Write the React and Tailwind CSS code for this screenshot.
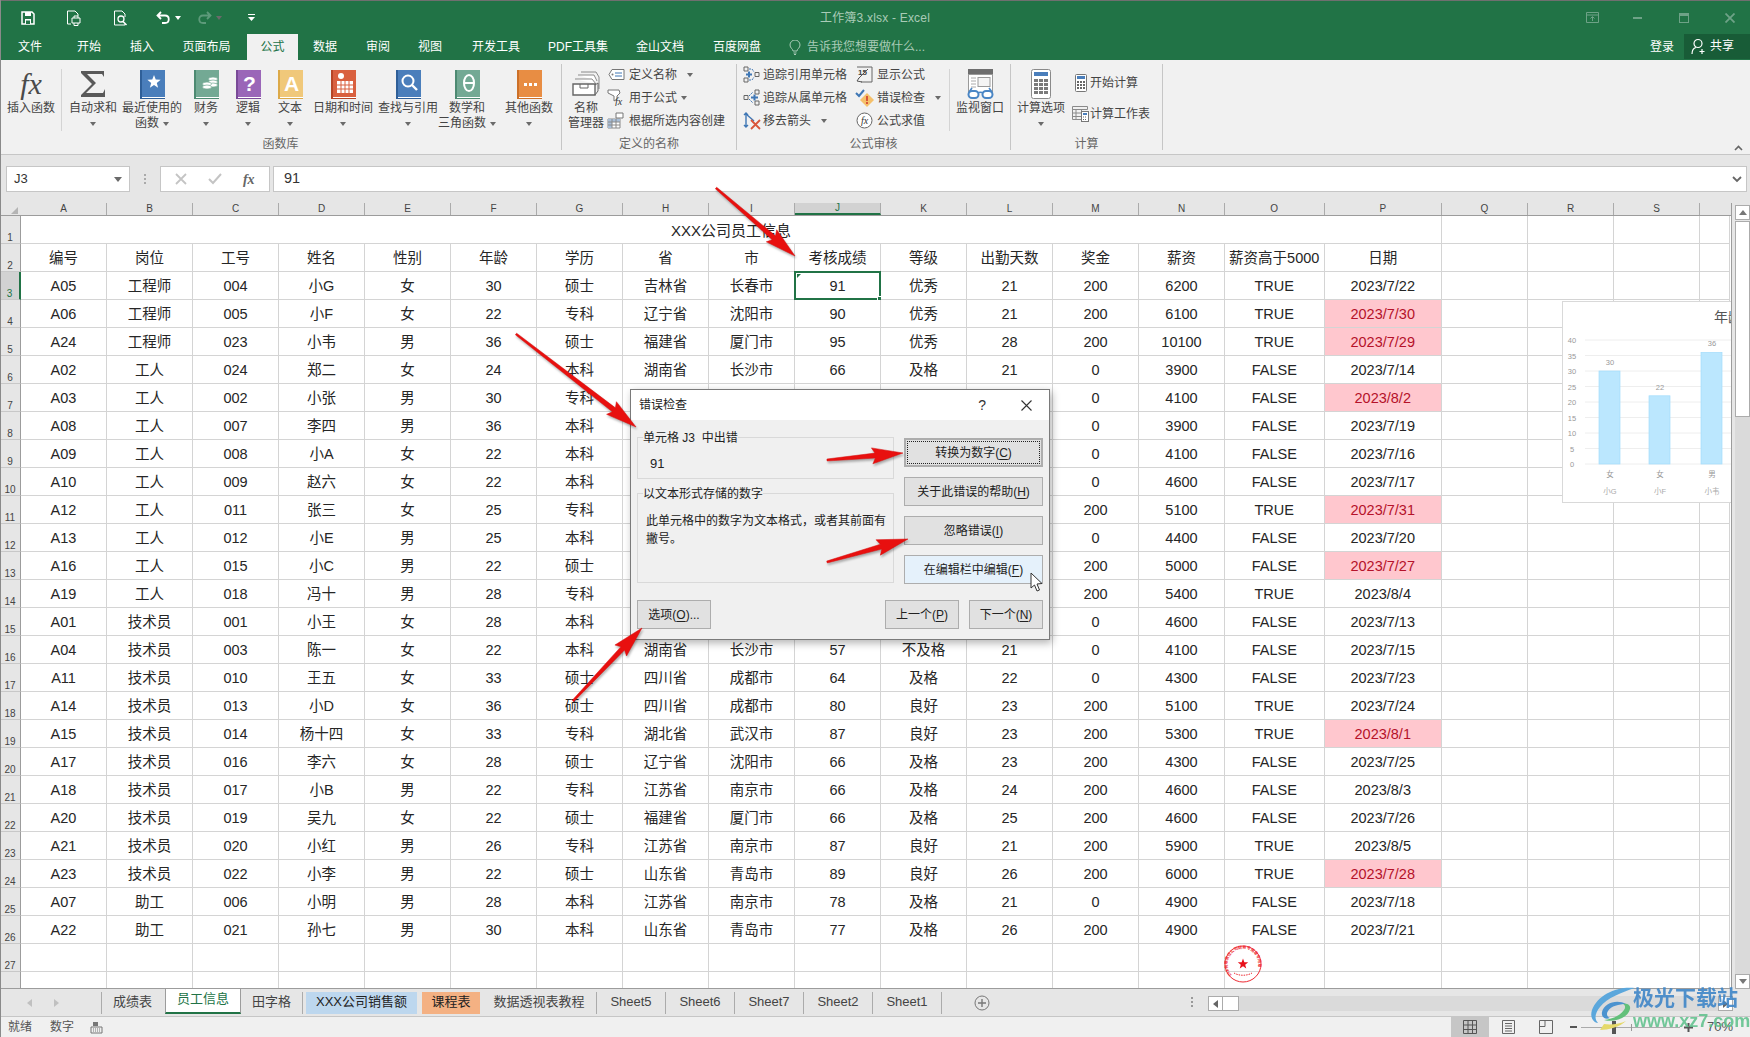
const COLS = ["A", "B", "C", "D", "E", "F", "G", "H", "I", "J", "K", "L", "M", "N", "O", "P", "Q", "R", "S", ""];

const HEADERS = ["编号", "岗位", "工号", "姓名", "性别", "年龄", "学历", "省", "市", "考核成绩", "等级", "出勤天数", "奖金", "薪资", "薪资高于5000", "日期"];

// "-" = hidden behind the dialog, * on the date = conditional format
const ROWS = [
  "A05 工程师 004 小G 女 30 硕士 吉林省 长春市 91 优秀 21 200 6200 TRUE 2023/7/22",
  "A06 工程师 005 小F 女 22 专科 辽宁省 沈阳市 90 优秀 21 200 6100 TRUE 2023/7/30*",
  "A24 工程师 023 小韦 男 36 硕士 福建省 厦门市 95 优秀 28 200 10100 TRUE 2023/7/29*",
  "A02 工人 024 郑二 女 24 本科 湖南省 长沙市 66 及格 21 0 3900 FALSE 2023/7/14",
  "A03 工人 002 小张 男 30 专科 - - - - - 0 4100 FALSE 2023/8/2*",
  "A08 工人 007 李四 男 36 本科 - - - - - 0 3900 FALSE 2023/7/19",
  "A09 工人 008 小A 女 22 本科 - - - - - 0 4100 FALSE 2023/7/16",
  "A10 工人 009 赵六 女 22 本科 - - - - - 0 4600 FALSE 2023/7/17",
  "A12 工人 011 张三 女 25 专科 - - - - - 200 5100 TRUE 2023/7/31*",
  "A13 工人 012 小E 男 25 本科 - - - - - 0 4400 FALSE 2023/7/20",
  "A16 工人 015 小C 男 22 硕士 - - - - - 200 5000 FALSE 2023/7/27*",
  "A19 工人 018 冯十 男 28 专科 - - - - - 200 5400 TRUE 2023/8/4",
  "A01 技术员 001 小王 女 28 本科 - - - - - 0 4600 FALSE 2023/7/13",
  "A04 技术员 003 陈一 女 22 本科 湖南省 长沙市 57 不及格 21 0 4100 FALSE 2023/7/15",
  "A11 技术员 010 王五 女 33 硕士 四川省 成都市 64 及格 22 0 4300 FALSE 2023/7/23",
  "A14 技术员 013 小D 女 36 硕士 四川省 成都市 80 良好 23 200 5100 TRUE 2023/7/24",
  "A15 技术员 014 杨十四 女 33 专科 湖北省 武汉市 87 良好 23 200 5300 TRUE 2023/8/1*",
  "A17 技术员 016 李六 女 28 硕士 辽宁省 沈阳市 66 及格 23 200 4300 FALSE 2023/7/25",
  "A18 技术员 017 小B 男 22 专科 江苏省 南京市 66 及格 24 200 4600 FALSE 2023/8/3",
  "A20 技术员 019 吴九 女 22 硕士 福建省 厦门市 66 及格 25 200 4600 FALSE 2023/7/26",
  "A21 技术员 020 小红 男 26 专科 江苏省 南京市 87 良好 21 200 5900 TRUE 2023/8/5",
  "A23 技术员 022 小李 男 22 硕士 山东省 青岛市 89 良好 26 200 6000 TRUE 2023/7/28*",
  "A07 助工 006 小明 男 28 本科 江苏省 南京市 78 及格 21 0 4900 FALSE 2023/7/18",
  "A22 助工 021 孙七 男 30 本科 山东省 青岛市 77 及格 26 200 4900 FALSE 2023/7/21",
].map((r) => r.split(" "));

const GRID_COLS = "grid grid-cols-[repeat(14,86px)_99.5px_117.5px_86px_86px_86px_30px]";

// ===== Small shapes =====
function Caret({ className = "" }) {
  return <span className={`inline-block w-0 h-0 border-x-[3px] border-t-[4px] border-x-transparent border-t-[#6a6a6a] ${className}`} />;
}

function Book({ color, dark, children }) {
  return (
    <svg width="25" height="29" viewBox="0 0 25 29">
      <rect x="1" y="0" width="24" height="27" fill={color} />
      <rect x="0" y="0" width="2" height="28" fill={dark} />
      <rect x="0" y="27" width="25" height="2" fill={dark} />
      <rect x="2" y="27" width="23" height="1" fill="#fff" />
      {children}
    </svg>
  );
}

function Star5({ cx, cy, r, fill }) {
  const pts = [];
  for (let i = 0; i < 10; i++) {
    const a = (Math.PI / 5) * i - Math.PI / 2;
    const rr = i % 2 ? r * 0.42 : r;
    pts.push(`${cx + rr * Math.cos(a)},${cy + rr * Math.sin(a)}`);
  }
  return <polygon points={pts.join(" ")} fill={fill} />;
}

const ICONS = {
  fx: <span className="[font-family:'Liberation_Serif',serif] italic text-[30px] leading-[30px] text-[#4a4a4a]">fx</span>,
  sum: (
    <svg width="26" height="28" viewBox="0 0 26 28">
      <path d="M1 1h23v6l-2-3H7l9 9-10 10h17l2-4v8H1v-2l11-11L1 3z" fill="#595959" />
    </svg>
  ),
  recent: (
    <Book color="#4a7ebb" dark="#2f5f98">
      <Star5 cx={14} cy={12} r={7} fill="#fff" />
    </Book>
  ),
  finance: (
    <Book color="#73a994" dark="#4d8a72">
      <g fill="#fff" stroke="#73a994" strokeWidth="0.7">
        <ellipse cx="19" cy="9" rx="4.5" ry="2" />
        <ellipse cx="19" cy="12" rx="4.5" ry="2" />
        <ellipse cx="19" cy="15" rx="4.5" ry="2" />
        <ellipse cx="13" cy="14" rx="4.5" ry="2" />
        <ellipse cx="13" cy="17" rx="4.5" ry="2" />
      </g>
    </Book>
  ),
  logic: (
    <Book color="#9a66b8" dark="#7a4a98">
      <text x="13.5" y="21" textAnchor="middle" fontSize="21" fontWeight="700" fill="#fff" fontFamily="Liberation Sans">?</text>
    </Book>
  ),
  text: (
    <Book color="#f0c87a" dark="#dca948">
      <text x="13.5" y="21" textAnchor="middle" fontSize="21" fontWeight="700" fill="#fff" fontFamily="Liberation Sans">A</text>
    </Book>
  ),
  date: (
    <Book color="#d9603f" dark="#b64526">
      <circle cx="10" cy="6" r="3" fill="#fff" />
      <path d="M6 11h16v12H6z" fill="#fff" />
      <path d="M6 15h16M6 19h16M10 11v12M14 11v12M18 11v12" stroke="#d9603f" strokeWidth="1" />
    </Book>
  ),
  lookup: (
    <Book color="#4a7ebb" dark="#2f5f98">
      <circle cx="12" cy="11" r="5.5" fill="none" stroke="#fff" strokeWidth="2" />
      <path d="M16 15l5 5" stroke="#fff" strokeWidth="2.4" />
    </Book>
  ),
  math: (
    <Book color="#73a994" dark="#4d8a72">
      <ellipse cx="14" cy="13" rx="5" ry="8" fill="none" stroke="#fff" strokeWidth="2" />
      <path d="M9 13h10" stroke="#fff" strokeWidth="2" />
    </Book>
  ),
  other: (
    <Book color="#e88d43" dark="#cc7028">
      <path d="M7 13h3v3H7zM12 13h3v3h-3zM17 13h3v3h-3z" fill="#fff" />
    </Book>
  ),
  names: (
    <svg width="28" height="28" viewBox="0 0 28 28" fill="none">
      <path d="M9 2h15l3 5v12" stroke="#8a8a8a" />
      <path d="M6 5h16l3 6" stroke="#8a8a8a" fill="#fff" />
      <path d="M3 9h17l4 5" stroke="#8a8a8a" fill="#fff" />
      <path d="M1 14h22v11H1z" fill="#fff" stroke="#666" strokeWidth="1.4" />
      <path d="M8 14v4h8v-4" stroke="#666" />
      <path d="M23 15l3-2v8l-3 4" stroke="#666" />
    </svg>
  ),
  watch: (
    <svg width="28" height="32" viewBox="0 0 28 32" fill="none">
      <rect x="2" y="1" width="25" height="6" fill="#6e6e6e" />
      <rect x="2.5" y="6.5" width="24" height="18" fill="#fff" stroke="#9a9a9a" />
      <path d="M5 10h5M5 13h5M5 16h5M5 19h5" stroke="#aaa" />
      <rect x="12" y="9.5" width="12" height="9" stroke="#9a9a9a" fill="#f5f5f5" />
      <rect x="2.5" y="23" width="10" height="7" rx="3.5" fill="#fff" stroke="#4a86c5" strokeWidth="2" />
      <rect x="16.5" y="23" width="10" height="7" rx="3.5" fill="#fff" stroke="#4a86c5" strokeWidth="2" />
      <path d="M12 25c1-1 4-1 5 0M3 24l3-4M26 24l-3-4" stroke="#4a86c5" strokeWidth="1.6" />
    </svg>
  ),
  calc: (
    <svg width="20" height="30" viewBox="0 0 20 30" fill="none">
      <rect x="0.5" y="0.5" width="19" height="29" rx="2" fill="#fff" stroke="#8a8a8a" />
      <rect x="3" y="3" width="14" height="4" fill="#4a7ebb" />
      {[10, 14, 18, 22].map((y) => [3, 8, 13].map((x) => <rect key={`${x}-${y}`} x={x} y={y} width="4" height="3" fill="#7a7a7a" />))}
    </svg>
  ),
};

const SMALL = {
  defineName: (
    <svg width="17" height="14" viewBox="0 0 17 14" fill="none">
      <path d="M4 1.5h12v10H4L1 6.5z" fill="#fff" stroke="#777" />
      <circle cx="4.5" cy="6.5" r="1" fill="#777" />
      <path d="M7 5h7M7 8h7" stroke="#3f77b5" />
    </svg>
  ),
  useFormula: (
    <svg width="18" height="17" viewBox="0 0 18 17" fill="none">
      <path d="M1 1h11l1 3-3 3v3l-3 2V7L1 4z" stroke="#777" fill="#fff" />
      <text x="8" y="16" fontSize="10" fontStyle="italic" fontFamily="Liberation Serif" fill="#333">fx</text>
    </svg>
  ),
  create: (
    <svg width="18" height="17" viewBox="0 0 18 17" fill="none">
      <path d="M9 1h7v5H9z" stroke="#777" fill="#fff" />
      <path d="M1 7h12v9H1z" stroke="#8a8a8a" fill="#fff" />
      <path d="M1 7h12v3H1zM1 10h4v6H1z" fill="#a9bfd8" />
      <path d="M1 10h12M1 13h12M5 7v9M9 7v9" stroke="#8a8a8a" />
    </svg>
  ),
  precedents: (
    <svg width="17" height="17" viewBox="0 0 17 17" fill="none">
      <path d="M1 1h4v4H1zM1 12h4v4H1zM12 6.5h4v4h-4z" stroke="#666" />
      <path d="M6 3h3l2 3M6 14h3l2-3" stroke="#3f77b5" strokeDasharray="2 1" />
      <path d="M3 8.5h6M6 5.5v6" stroke="#3f77b5" strokeWidth="2" />
    </svg>
  ),
  dependents: (
    <svg width="17" height="17" viewBox="0 0 17 17" fill="none">
      <path d="M12 1h4v4h-4zM12 12h4v4h-4zM1 6.5h4v4H1z" stroke="#666" />
      <path d="M6 7l4-4M6 10l4 4" stroke="#3f77b5" strokeDasharray="2 1" />
      <path d="M8 8.5h7M11.5 5.5v6" stroke="#3f77b5" strokeWidth="2" />
    </svg>
  ),
  removeArrows: (
    <svg width="18" height="18" viewBox="0 0 18 18" fill="none">
      <path d="M3 1v14M1 3l2-2 2 2M1 13l2 2 2-2" stroke="#3f77b5" strokeWidth="1.4" />
      <path d="M3 2l8 7" stroke="#3f77b5" strokeWidth="1.4" />
      <path d="M8 8l9 9M17 8l-9 9" stroke="#d9553a" strokeWidth="1.8" />
    </svg>
  ),
  showFormulas: (
    <svg width="17" height="17" viewBox="0 0 17 17" fill="none">
      <path d="M1 1h15v15H5" stroke="#666" />
      <text x="2" y="9" fontSize="8" fontWeight="700" fontFamily="Liberation Sans" fill="#444">15</text>
      <path d="M2 13l10-10M6 16l-5-1 2-3" stroke="#555" />
    </svg>
  ),
  errorCheck: (
    <svg width="20" height="18" viewBox="0 0 20 18" fill="none">
      <path d="M12 4l7 7-7 7-7-7z" fill="#f5c06a" />
      <path d="M12 7v5M12 13v2" stroke="#d9553a" strokeWidth="2" />
      <path d="M1 4l3 3 5-6" stroke="#3f77b5" strokeWidth="2" />
    </svg>
  ),
  evaluate: (
    <svg width="17" height="17" viewBox="0 0 17 17" fill="none">
      <circle cx="8.5" cy="8.5" r="7.5" stroke="#666" fill="#fff" />
      <text x="8.5" y="12" textAnchor="middle" fontSize="10" fontStyle="italic" fontFamily="Liberation Serif" fill="#333">fx</text>
    </svg>
  ),
  calcNow: (
    <svg width="12" height="18" viewBox="0 0 12 18" fill="none">
      <rect x="0.5" y="0.5" width="11" height="17" rx="1" fill="#fff" stroke="#777" />
      <rect x="2" y="2" width="8" height="3" fill="#4a7ebb" />
      {[7, 10, 13].map((y) => [2, 5, 8].map((x) => <rect key={`${x}-${y}`} x={x} y={y} width="2" height="2" fill="#666" />))}
    </svg>
  ),
  calcSheet: (
    <svg width="17" height="16" viewBox="0 0 17 16" fill="none">
      <path d="M0.5 0.5h15v3h-15zM0.5 3.5h9v10h-9zM0.5 7h9M0.5 10.5h9M4 3.5v10" stroke="#8a8a8a" />
      <rect x="9.5" y="5.5" width="7" height="10" fill="#fff" stroke="#777" />
      <rect x="11" y="7" width="4" height="2" fill="#4a7ebb" />
      <path d="M11 11h4M11 13.5h4" stroke="#666" strokeDasharray="1 1" />
    </svg>
  ),
};

// ===== Ribbon bits =====
function BigButton({ w, icon, lines, caret, className = "" }) {
  return (
    <div className={`flex flex-col items-center shrink-0 ${w} ${className}`}>
      <div className="h-[34px] mt-[3px] flex items-center justify-center">{icon}</div>
      {lines.map((l, i) => (
        <div key={i} className="h-[15px] leading-[15px] whitespace-nowrap text-[12px] text-[#444] flex items-center gap-[4px]">
          {l}
          {caret && i === 1 && <Caret />}
        </div>
      ))}
      {caret && lines.length === 1 && (
        <div className="h-[15px] flex items-center">
          <Caret />
        </div>
      )}
    </div>
  );
}

function SmallRow({ icon, label, caret, caretGap = "ml-1.5", iconW = "w-[26px]" }) {
  return (
    <div className="h-[23px] flex items-center whitespace-nowrap text-[12px] text-[#444]">
      <div className={`${iconW} flex justify-center shrink-0`}>{icon}</div>
      <span>{label}</span>
      {caret && <Caret className={caretGap} />}
    </div>
  );
}

function Group({ w, label, children }) {
  return (
    <div className={`relative shrink-0 h-[86px] mt-[4px] border-r border-[#c6c6c6] ${w}`}>
      <div className="flex h-[70px]">{children}</div>
      <div className="absolute bottom-[-2px] inset-x-0 text-center text-[12px] leading-[16px] text-[#666]">{label}</div>
    </div>
  );
}

function Ribbon() {
  return (
    <div className="relative h-[95px] bg-[#f1f1f1] border-b border-[#c6c6c6] flex">
      <Group w="w-[562px]" label="函数库">
        <BigButton w="w-[60px]" icon={ICONS.fx} lines={["插入函数"]} className="ml-px" />
        <div className="w-px h-[62px] mt-[5px] bg-[#d4d4d4] mr-[5px]" />
        <BigButton w="w-[52px]" icon={ICONS.sum} lines={["自动求和"]} caret />
        <BigButton w="w-[66px]" icon={ICONS.recent} lines={["最近使用的", "函数"]} caret />
        <BigButton w="w-[42px]" icon={ICONS.finance} lines={["财务"]} caret />
        <BigButton w="w-[42px]" icon={ICONS.logic} lines={["逻辑"]} caret />
        <BigButton w="w-[42px]" icon={ICONS.text} lines={["文本"]} caret />
        <BigButton w="w-[64px]" icon={ICONS.date} lines={["日期和时间"]} caret />
        <BigButton w="w-[66px]" icon={ICONS.lookup} lines={["查找与引用"]} caret />
        <BigButton w="w-[52px]" icon={ICONS.math} lines={["数学和", "三角函数"]} caret />
        <BigButton w="w-[64px]" icon={ICONS.other} lines={["其他函数"]} caret className="ml-1" />
      </Group>
      <Group w="w-[175px]" label="定义的名称">
        <BigButton w="w-[48px]" icon={ICONS.names} lines={["名称", "管理器"]} />
        <div className="flex flex-col -ml-[7px] -mt-[1px]">
          <SmallRow icon={SMALL.defineName} label="定义名称" caret caretGap="ml-[10px]" />
          <SmallRow icon={SMALL.useFormula} label="用于公式" caret caretGap="ml-[4px]" />
          <SmallRow icon={SMALL.create} label="根据所选内容创建" />
        </div>
      </Group>
      <Group w="w-[274px]" label="公式审核">
        <div className="flex flex-col w-[120px] ml-[3px] -mt-[1px] shrink-0">
          <SmallRow icon={SMALL.precedents} label="追踪引用单元格" iconW="w-[23px]" />
          <SmallRow icon={SMALL.dependents} label="追踪从属单元格" iconW="w-[23px]" />
          <SmallRow icon={SMALL.removeArrows} label="移去箭头" caret caretGap="ml-[10px]" iconW="w-[23px]" />
        </div>
        <div className="flex flex-col w-[89px] -mt-[1px] shrink-0 -ml-[8px]">
          <SmallRow icon={SMALL.showFormulas} label="显示公式" iconW="w-[25px]" />
          <SmallRow icon={SMALL.errorCheck} label="错误检查" caret caretGap="ml-[10px]" iconW="w-[25px]" />
          <SmallRow icon={SMALL.evaluate} label="公式求值" iconW="w-[25px]" />
        </div>
        <div className="w-px h-[62px] mt-[5px] bg-[#d4d4d4] ml-[8px]" />
        <BigButton w="w-[60px]" icon={ICONS.watch} lines={["监视窗口"]} />
      </Group>
      <Group w="w-[152px]" label="计算">
        <BigButton w="w-[60px]" icon={ICONS.calc} lines={["计算选项"]} caret />
        <div className="flex flex-col gap-[8px] mt-[7px]">
          <SmallRow icon={SMALL.calcNow} label="开始计算" iconW="w-[19px]" />
          <SmallRow icon={SMALL.calcSheet} label="计算工作表" iconW="w-[19px]" />
        </div>
      </Group>
      {/* collapse chevron */}
      <svg className="absolute right-[7px] bottom-[3px]" width="9" height="6" viewBox="0 0 9 6" fill="none">
        <path d="M1 5l3.5-3.5L8 5" stroke="#666" strokeWidth="1.6" />
      </svg>
    </div>
  );
}

function TitleBar() {
  return (
    <div className="h-[34px] bg-[#217346] border-t border-[#6f6f6f] grid grid-cols-[1fr_auto_1fr] items-center">
      <div className="flex items-center">
        <svg className="ml-[21px]" width="14" height="14" viewBox="0 0 14 14" fill="none">
          <path d="M1 1h10l2 2v10H1z" stroke="#fff" strokeWidth="1.5" />
          <path d="M4 1h6v4H4zM4 13V8h6v5" fill="#fff" />
          <path d="M5 9.5h4v3.5H5z" fill="#217346" />
        </svg>
        <svg className="ml-[31px]" width="15" height="16" viewBox="0 0 15 16" fill="none" stroke="#fff">
          <path d="M9 1H1.5v13H5M9 1l3 3v2" />
          <path d="M6 8h8v5H6zM8 8V6h4v2M8 13v2.5h4V13" />
        </svg>
        <svg className="ml-[32px]" width="15" height="16" viewBox="0 0 15 16" fill="none" stroke="#fff">
          <path d="M9 1H1.5v14H12v-1M9 1l3 3v3" />
          <circle cx="8" cy="9" r="3" strokeWidth="1.3" />
          <path d="M10 11.5l3.5 3.5" strokeWidth="1.6" />
        </svg>
        <svg className="ml-[28px]" width="15" height="13" viewBox="0 0 15 13" fill="none" stroke="#fff" strokeWidth="1.8">
          <path d="M5 1L1.5 4.5 5 8M1.5 4.5H9c5 0 5 7.5 0 7.5H6" />
        </svg>
        <Caret className="ml-[4px] border-t-white" />
        <svg className="ml-[16px]" width="15" height="13" viewBox="0 0 15 13" fill="none" stroke="#5d9a7a" strokeWidth="1.8">
          <path d="M10 1l3.5 3.5L10 8M13.5 4.5H6c-5 0-5 7.5 0 7.5h3" />
        </svg>
        <Caret className="ml-[4px] border-t-[#5d9a7a]" />
        <svg className="ml-[26px]" width="7" height="7" viewBox="0 0 7 7">
          <path d="M0 0h7v1H0zM0 3h7L3.5 7z" fill="#fff" />
        </svg>
      </div>
      <div className="text-[12px] text-[#a9cbb7] tracking-[0.2px]">工作簿3.xlsx - Excel</div>
      <div className="flex items-center justify-end">
        <svg className="mr-[34px]" width="13" height="11" viewBox="0 0 13 11" fill="none" stroke="#6ea287">
          <path d="M.5.5h12v10H.5zM.5 3h12" />
          <path d="M6.5 9V5M4.5 6.5l2-2 2 2" />
        </svg>
        <div className="w-[9px] h-[2px] bg-[#6ea287] mr-[37px]" />
        <div className="w-[10px] h-[10px] border border-t-[3px] border-[#6ea287] mr-[36px]" />
        <svg className="mr-[15px]" width="10" height="10" viewBox="0 0 10 10" fill="none" stroke="#6ea287" strokeWidth="1.8">
          <path d="M.5.5l9 9M9.5.5l-9 9" />
        </svg>
      </div>
    </div>
  );
}

const TABS = [
  ["文件", "w-[60px]"],
  ["开始", "w-[58px]"],
  ["插入", "w-[48px]"],
  ["页面布局", "w-[81px]"],
  ["公式", "w-[51px]"],
  ["数据", "w-[54px]"],
  ["审阅", "w-[52px]"],
  ["视图", "w-[52px]"],
  ["开发工具", "w-[80px]"],
  ["PDF工具集", "w-[84px]"],
  ["金山文档", "w-[80px]"],
  ["百度网盘", "w-[74px]"],
];

function TabRow() {
  return (
    <div className="h-[26px] bg-[#217346] flex items-stretch text-[12px] text-white">
      {TABS.map(([t, w]) => (
        <div key={t} className={`${w} flex items-center justify-center ${t === "公式" ? "bg-[#f1f1f1] text-[#217346]" : ""}`}>
          {t}
        </div>
      ))}
      <svg className="ml-[15px] self-center" width="12" height="15" viewBox="0 0 12 15" fill="none" stroke="#a9cbb7">
        <path d="M4 11c0-2-3-3-3-6a5 5 0 0110 0c0 3-3 4-3 6zM4.5 13h3M5 14.500h2" />
      </svg>
      <div className="ml-[6px] self-center text-[#a9cbb7]">告诉我您想要做什么...</div>
      <div className="ml-auto self-center mr-[10px]">登录</div>
      <div className="w-[66px] bg-[#185c37] flex items-center mb-px">
        <svg className="ml-[7px]" width="16" height="17" viewBox="0 0 16 17" fill="none" stroke="#fff" strokeWidth="1.2">
          <circle cx="7" cy="5.5" r="4" />
          <path d="M1 16c0-4 2-6 4-6.5M11 11v5M8.5 13.5h5" />
        </svg>
        <span className="ml-[3px] -mt-[2px]">共享</span>
      </div>
    </div>
  );
}

function FormulaBar() {
  return (
    <div className="h-[48px] bg-[#e6e6e6] flex items-start pt-[11px] pl-[6px] pr-[3px]">
      <div className="w-[124px] h-[26px] bg-white border border-[#c6c6c6] flex items-center justify-between px-[7px] text-[13px] text-[#333]">
        J3
        <Caret className="border-x-[4px] border-t-[5px]" />
      </div>
      <div className="w-[30px] h-[26px] flex flex-col items-center justify-center gap-[2px]">
        <span className="w-[2px] h-[2px] bg-[#aaa]" />
        <span className="w-[2px] h-[2px] bg-[#aaa]" />
        <span className="w-[2px] h-[2px] bg-[#aaa]" />
      </div>
      <div className="w-[110px] h-[26px] bg-white border border-[#c6c6c6] flex items-center justify-around px-[4px]">
        <svg width="12" height="12" viewBox="0 0 12 12" fill="none" stroke="#c4c4c4" strokeWidth="1.8">
          <path d="M1 1l10 10M11 1L1 11" />
        </svg>
        <svg width="14" height="12" viewBox="0 0 14 12" fill="none" stroke="#c4c4c4" strokeWidth="2">
          <path d="M1 6l4 4 8-9" />
        </svg>
        <span className="[font-family:'Liberation_Serif',serif] italic font-bold text-[14px] text-[#666]">fx</span>
      </div>
      <div className="ml-[3px] flex-1 h-[26px] bg-white border border-[#c6c6c6] flex items-center pl-[10px] pr-[4px] text-[14.5px] text-[#333]">
        91
        <svg className="ml-auto" width="10" height="7" viewBox="0 0 10 7" fill="none" stroke="#666" strokeWidth="1.8">
          <path d="M1 1l4 4 4-4" />
        </svg>
      </div>
    </div>
  );
}

// ===== Sheet =====
function Cell({ children, pink, selected, className = "" }) {
  return (
    <div
      className={`relative min-w-0 h-[28px] flex items-center justify-center whitespace-nowrap border-r border-b border-[#d4d4d4] text-[14.5px] pt-[3px]
        ${pink ? "bg-[#ffc7ce] text-[#b5122a]" : "text-[#262626]"} ${className}`}
    >
      {children}
      {selected && (
        <>
          <span className="absolute -inset-[1px] border-2 border-[#217346]" />
          <span className="absolute top-[2px] left-[2px] border-t-[4px] border-r-[4px] border-t-[#217346] border-r-transparent" />
          <span className="absolute -right-[2px] -bottom-[2px] w-[5px] h-[5px] bg-[#217346] border border-white" />
        </>
      )}
    </div>
  );
}

function RowHead({ n, active }) {
  return (
    <div
      className={`w-[21px] shrink-0 h-[28px] flex items-end justify-center pb-[1px] text-[10px] leading-[9px] border-b border-[#c8c8c8] box-border
        ${active ? "bg-[#d2d2d2] text-[#217346] border-r-2 border-r-[#217346]" : "bg-[#e6e6e6] text-[#444] border-r border-r-[#9c9c9c]"}`}
    >
      {n}
    </div>
  );
}

function SheetRow({ n, children }) {
  return (
    <div className="flex">
      <RowHead n={n} active={n === 3} />
      <div className={GRID_COLS}>{children}</div>
    </div>
  );
}

function EmptyTail() {
  return COLS.slice(16).map((c, i) => <Cell key={i + c} />);
}

function Chart() {
  const top = 38; // y of the 40 line
  const base = 162;
  const ticks = [40, 35, 30, 25, 20, 15, 10, 5, 0];
  const bars = [
    { x: 36, v: 30, a: "女", b: "小G" },
    { x: 86, v: 22, a: "女", b: "小F" },
    { x: 138, v: 36, a: "男", b: "小韦" },
  ];
  return (
    <div className="absolute left-[1562px] top-[98px] w-[300px] h-[202px] bg-white border border-[#d9d9d9]">
      <svg width="298" height="200" viewBox="0 0 298 200" fontFamily="Liberation Sans, Noto Sans CJK SC, sans-serif">
        <text x="151" y="20" fontSize="14" fill="#555">年龄</text>
        {ticks.map((t) => {
          const y = base - (t / 40) * (base - top);
          return (
            <g key={t}>
              <line x1="22" x2="298" y1={y} y2={y} stroke="#eeeeee" />
              <text x="9" y={y + 3} fontSize="7.5" fill="#999" textAnchor="middle">{t}</text>
            </g>
          );
        })}
        {bars.map((b) => {
          const y = base - (b.v / 40) * (base - top);
          return (
            <g key={b.x}>
              <rect x={b.x} y={y} width="21" height={base - y} fill="#bbe7fe" stroke="#a4dcfb" strokeWidth="0.7" />
              <text x={b.x + 11} y={y - 6} fontSize="7.5" fill="#999" textAnchor="middle">{b.v}</text>
              <text x={b.x + 11} y="175" fontSize="7.5" fill="#999" textAnchor="middle">{b.a}</text>
              <text x={b.x + 11} y="192" fontSize="7.5" fill="#aaa" textAnchor="middle">{b.b}</text>
            </g>
          );
        })}
      </svg>
    </div>
  );
}

function Stamp() {
  return (
    <svg className="absolute left-[1224px] top-[742px]" width="38" height="38" viewBox="0 0 38 38" fill="none">
      <circle cx="19" cy="19" r="18" stroke="#ee2b33" strokeWidth="1" />
      <path id="stamp-arc" d="M8 30a15.500 15.500 0 1 1 22 0" fill="none" />
      <text fontSize="4" fontWeight="700" fill="#ee2b33" fontFamily="Noto Sans CJK SC, sans-serif">
        <textPath href="#stamp-arc">XXX有限责任公司财务专用章专用章</textPath>
      </text>
      <path d="M10 28c5 3 13 3 18 0" stroke="#ee2b33" strokeDasharray="1.5 1" />
      <Star5 cx={19} cy={19} r={5.5} fill="#e8101a" />
    </svg>
  );
}

function Sheet() {
  return (
    <div className="flex h-[786px]">
      <div className="relative w-[1732px] shrink-0 overflow-hidden border-b border-r border-[#9c9c9c]">
        {/* column letters */}
        <div className="flex h-[12px] box-content border-b border-[#9c9c9c] bg-[#e6e6e6]">
          <div className="w-[21px] shrink-0 relative">
            <span className="absolute right-[3px] bottom-[1px] border-b-[7px] border-l-[7px] border-b-[#b4b4b4] border-l-transparent" />
          </div>
          <div className={GRID_COLS}>
            {COLS.map((c, i) => (
              <div
                key={i}
                className={`h-[12px] flex items-center justify-center text-[10px] leading-none border-r border-[#ababab]
                  ${c === "J" ? "bg-[#d2d2d2] text-[#217346] border-b-2 border-b-[#217346]" : "text-[#444]"} ${i === 19 ? "border-r-0" : ""}`}
              >
                {c}
              </div>
            ))}
          </div>
        </div>

        <SheetRow n={1}>
          <Cell className="col-span-16 text-[15px] pt-[1px]">XXX公司员工信息</Cell>
          <EmptyTail />
        </SheetRow>
        <SheetRow n={2}>
          {HEADERS.map((h) => (
            <Cell key={h}>{h}</Cell>
          ))}
          <EmptyTail />
        </SheetRow>
        {ROWS.map((row, ri) => (
          <SheetRow key={ri} n={ri + 3}>
            {row.map((v, ci) => (
              <Cell key={ci} pink={v.endsWith("*")} selected={ri === 0 && ci === 9}>
                {v === "-" ? "" : v.replace("*", "")}
              </Cell>
            ))}
            <EmptyTail />
          </SheetRow>
        ))}
        {[27, 28].map((n) => (
          <SheetRow key={n} n={n === 28 ? "" : n}>
            {COLS.map((c, i) => (
              <Cell key={i} />
            ))}
          </SheetRow>
        ))}

        <Chart />
        <Stamp />
      </div>

      {/* vertical scrollbar */}
      <div className="flex-1 bg-[#e6e6e6] flex flex-col pl-[3px]">
        <div className="h-[15px] mt-[2px] bg-white border border-[#ababab] flex items-center justify-center">
          <span className="border-x-[4px] border-b-[5px] border-x-transparent border-b-[#777]" />
        </div>
        <div className="h-[196px] mt-px bg-white border border-[#ababab]" />
        <div className="flex-1 bg-[#dadada]" />
        <div className="h-[15px] bg-white border border-[#ababab] flex items-center justify-center">
          <span className="border-x-[4px] border-t-[5px] border-x-transparent border-t-[#777]" />
        </div>
      </div>
    </div>
  );
}

// ===== Sheet tabs =====
const SHEETS = [
  { name: "成绩表", w: "w-[63px]", cls: "text-[#444] h-[22px] mt-[3px] pr-[2px]" },
  { name: "员工信息", w: "w-[76px]", cls: "bg-white text-[#217346] border-x border-[#9c9c9c] border-b-2 border-b-[#217346] -mt-px h-[26px]" },
  { name: "田字格", w: "w-[62px]", cls: "text-[#444] border-r border-[#ababab] h-[22px] mt-[3px]" },
  { name: "XXX公司销售额", w: "w-[111px] ml-[3px]", cls: "bg-[#bdd7ee] text-[#222] h-[22px] mt-[3px]" },
  { name: "课程表", w: "w-[58px] ml-[5px]", cls: "bg-[#f4b183] text-[#222] h-[22px] mt-[3px]" },
  { name: "数据透视表教程", w: "w-[115px] ml-[2px]", cls: "text-[#444] border-r border-[#ababab] h-[22px] mt-[3px]" },
  { name: "Sheet5", w: "w-[69px]", cls: "text-[#444] border-r border-[#ababab] h-[22px] mt-[3px]" },
  { name: "Sheet6", w: "w-[69px]", cls: "text-[#444] border-r border-[#ababab] h-[22px] mt-[3px]" },
  { name: "Sheet7", w: "w-[69px]", cls: "text-[#444] border-r border-[#ababab] h-[22px] mt-[3px]" },
  { name: "Sheet2", w: "w-[69px]", cls: "text-[#444] border-r border-[#ababab] h-[22px] mt-[3px]" },
  { name: "Sheet1", w: "w-[69px]", cls: "text-[#444] border-r border-[#ababab] h-[22px] mt-[3px]" },
];

function SheetTabs() {
  return (
    <div className="h-[28px] bg-[#e6e6e6] border-b border-[#c6c6c6] flex items-start">
      <div className="w-[102px] h-[22px] mt-[3px] border-r border-[#ababab] flex items-center pl-[27px] gap-[22px]">
        <span className="border-y-[4px] border-r-[5px] border-y-transparent border-r-[#c0c0c0]" />
        <span className="border-y-[4px] border-l-[5px] border-y-transparent border-l-[#c0c0c0]" />
      </div>
      {SHEETS.map((s) => (
        <div key={s.name} className={`${s.w} ${s.cls} flex items-center justify-center pb-[3px] text-[13px] whitespace-nowrap shrink-0`}>
          {s.name}
        </div>
      ))}
      <svg className="ml-[32px] mt-[6px]" width="16" height="16" viewBox="0 0 16 16" fill="none" stroke="#777">
        <circle cx="8" cy="8" r="7" />
        <path d="M8 4v8M4 8h8" strokeWidth="1.4" />
      </svg>
      <div className="ml-[201px] mt-[8px] flex flex-col gap-[2px]">
        <span className="w-[2px] h-[2px] bg-[#999]" />
        <span className="w-[2px] h-[2px] bg-[#999]" />
        <span className="w-[2px] h-[2px] bg-[#999]" />
      </div>
      <div className="ml-[15px] mt-[7px] w-[525px] h-[15px] bg-[#dadada] flex">
        <div className="w-[15px] bg-white border border-[#ababab] flex items-center justify-center">
          <span className="border-y-[4px] border-r-[5px] border-y-transparent border-r-[#666]" />
        </div>
        <div className="w-[16px] bg-white border-y border-r border-[#ababab]" />
        <div className="ml-auto w-[15px] bg-white border border-[#ababab] flex items-center justify-center">
          <span className="border-y-[4px] border-l-[5px] border-y-transparent border-l-[#666]" />
        </div>
      </div>
    </div>
  );
}

function StatusBar() {
  return (
    <div className="h-[20px] bg-[#f0f0f0] flex items-center text-[12px] text-[#555]">
      <span className="ml-[8px]">就绪</span>
      <span className="ml-[18px]">数字</span>
      <svg className="ml-[16px]" width="13" height="13" viewBox="0 0 13 13" fill="none">
        <path d="M3 1h5v4H3z" fill="#777" />
        <path d="M1 6h11v6H1z" stroke="#777" />
        <path d="M3 8h7M3 10h7" stroke="#777" strokeDasharray="1 1" />
      </svg>
      <div className="ml-auto w-[38px] h-full bg-[#c6c6c6] flex items-center justify-center">
        <svg width="14" height="14" viewBox="0 0 14 14" fill="none" stroke="#555">
          <path d="M.5.5h13v13H.5zM.5 5h13M.5 9.5h13M5 .5v13M9.5.5v13" />
        </svg>
      </div>
      <svg className="ml-[13px]" width="13" height="14" viewBox="0 0 13 14" fill="none" stroke="#666">
        <path d="M.5.5h12v13H.5zM3 3.5h7M3 6h7M3 8.5h7M3 11h7" />
      </svg>
      <svg className="ml-[24px]" width="14" height="14" viewBox="0 0 14 14" fill="none" stroke="#666">
        <path d="M.5.5h13v13H.5zM6 .5v6H.5" />
      </svg>
      <div className="ml-[17px] w-[7px] h-[2px] bg-[#555]" />
      <div className="relative ml-[4px] w-[99px] h-px bg-[#aaa]">
        <span className="absolute left-[31px] -top-[6px] w-[4px] h-[13px] bg-[#555]" />
        <span className="absolute left-[50px] -top-[3px] w-px h-[7px] bg-[#999]" />
      </div>
      <svg className="ml-[4px]" width="9" height="9" viewBox="0 0 9 9" stroke="#555" strokeWidth="2">
        <path d="M4.500 0v9M0 4.500h9" />
      </svg>
      <span className="ml-[14px] mr-[17px] text-[13px]">70%</span>
    </div>
  );
}

// ===== Dialog =====
function DlgButton({ children, className = "" }) {
  return (
    <div className={`h-[29px] bg-[#e1e1e1] border border-[#adadad] flex items-center justify-center text-[12px] text-[#222] whitespace-nowrap ${className}`}>
      {children}
    </div>
  );
}

function Mn({ children }) {
  return <span className="underline underline-offset-2">{children}</span>;
}

function ErrorDialog() {
  return (
    <div className="absolute left-[630px] top-[389px] w-[420px] h-[251px] bg-[#f0f0f0] border border-[#7a7a7a] shadow-[2px_3px_8px_rgba(0,0,0,0.3)] flex flex-col text-[12px] text-[#222]">
      <div className="h-[30px] bg-white flex items-center pl-[8px] shrink-0">
        错误检查
        <span className="ml-auto mr-[35px] text-[14px] text-[#333]">?</span>
        <svg className="mr-[17px]" width="11" height="11" viewBox="0 0 11 11" fill="none" stroke="#333" strokeWidth="1.1">
          <path d="M.5.5l10 10M10.500.5l-10 10" />
        </svg>
      </div>
      <div className="flex flex-1 px-[6px] pt-[17px] gap-[10px]">
        <div className="w-[257px] flex flex-col">
          <div className="relative h-[42px] border border-[#d9d9d9] flex items-end pl-[12px] pb-[5px]">
            <span className="absolute -top-[8px] left-[5px] bg-[#f0f0f0] leading-[16px] whitespace-pre">单元格 J3  中出错</span>
            <span className="text-[13px]">91</span>
          </div>
          <div className="relative mt-[14px] h-[90px] border border-[#d9d9d9] pl-[8px] pr-[1px] pt-[18px] leading-[18px]">
            <span className="absolute -top-[8px] left-[5px] bg-[#f0f0f0] leading-[16px]">以文本形式存储的数字</span>
            此单元格中的数字为文本格式，或者其前面有撇号。
          </div>
        </div>
        <div className="w-[139px] flex flex-col gap-[10px] mt-[1px]">
          <DlgButton className="border-2 border-[#0078d7] outline-1 outline-dotted -outline-offset-4 outline-[#222]">
            转换为数字(<Mn>C</Mn>)
          </DlgButton>
          <DlgButton>
            关于此错误的帮助(<Mn>H</Mn>)
          </DlgButton>
          <DlgButton>
            忽略错误(<Mn>I</Mn>)
          </DlgButton>
          <DlgButton className="bg-[#e5f1fb] border-[#0078d7]">
            在编辑栏中编辑(<Mn>F</Mn>)
          </DlgButton>
        </div>
      </div>
      <div className="flex px-[6px] pb-[10px] shrink-0">
        <DlgButton className="w-[74px]">
          选项(<Mn>O</Mn>)...
        </DlgButton>
        <DlgButton className="w-[74px] ml-auto">
          上一个(<Mn>P</Mn>)
        </DlgButton>
        <DlgButton className="w-[74px] ml-[10px]">
          下一个(<Mn>N</Mn>)
        </DlgButton>
      </div>
    </div>
  );
}

// ===== Annotation arrows =====
function arrowPoints([x1, y1], [x2, y2]) {
  const len = Math.hypot(x2 - x1, y2 - y1);
  const ux = (x2 - x1) / len;
  const uy = (y2 - y1) / len;
  const nx = -uy;
  const ny = ux;
  const hx = x2 - ux * 28;
  const hy = y2 - uy * 28;
  const p = (x, y) => `${x},${y}`;
  return [
    p(x1 + nx, y1 + ny),
    p(hx + nx * 2.5, hy + ny * 2.5),
    p(hx - ux * 3 + nx * 8, hy - uy * 3 + ny * 8),
    p(x2, y2),
    p(hx - ux * 3 - nx * 8, hy - uy * 3 - ny * 8),
    p(hx - nx * 2.5, hy - ny * 2.5),
    p(x1 - nx, y1 - ny),
  ].join(" ");
}

const ARROWS = [
  [[716, 188], [795, 256]],
  [[516, 334], [636, 427]],
  [[827, 460], [903, 453]],
  [[827, 562], [908, 539]],
  [[573, 701], [642, 628]],
];

function Annotations() {
  return (
    <svg className="absolute inset-0 pointer-events-none" width="1750" height="1037">
      <path d="M.5 0v1037" stroke="#8a8a8a" />
      {ARROWS.map(([a, b], i) => (
        <polygon key={i} points={arrowPoints(a, b)} fill="#e8100f" stroke="#d40c0c" strokeWidth="0.5" className="drop-shadow-[1px_2px_1px_rgba(0,0,0,0.3)]" />
      ))}
      {/* mouse pointer */}
      <path d="M1031 573v15l3.500-3 2.500 6 2.500-1-2.500-6 5-.5z" fill="#fff" stroke="#333" />
    </svg>
  );
}

function Watermark() {
  return (
    <div className="absolute left-[1590px] top-[986px] w-[160px] h-[50px] flex pointer-events-none">
      <svg width="46" height="46" viewBox="0 0 46 46" className="shrink-0">
        <path d="M45 2C28 0 8 8 2 24c-2 6 0 12 6 13-4-4-3-10 2-16C17 12 32 6 45 2z" fill="#5ba7dc" />
        <path d="M36 18c-9-5-22-1-24 8-1 5 3 8 8 6-3-1-4-4-2-7 3-5 11-7 18-7z" fill="#4c93cf" />
        <path d="M14 34c10 3 24-2 26-11 1-4-3-6-7-5 2 1 3 3 1 6-4 6-12 9-20 10z" fill="#62c07a" />
        <path d="M10 44c8 0 20-3 26-9-6 3-15 4-22 3z" fill="#e5d96a" />
      </svg>
      <div className="-ml-[3px] flex flex-col">
        <div className="text-[21px] leading-[23px] font-bold text-[#3f86c8] whitespace-nowrap opacity-90">极光下载站</div>
        <div className="text-[18px] leading-[20px] font-bold text-[#5cc08a] opacity-85 whitespace-nowrap mt-[2px]">www.xz7.com</div>
      </div>
    </div>
  );
}

export default function App() {
  return (
    <div className="relative w-[1750px] h-[1037px] overflow-hidden bg-white [font-family:'Liberation_Sans','Noto_Sans_CJK_SC',sans-serif]">
      <TitleBar />
      <TabRow />
      <Ribbon />
      <FormulaBar />
      <Sheet />
      <SheetTabs />
      <StatusBar />

      <ErrorDialog />
      <Annotations />
      <Watermark />
    </div>
  );
}
